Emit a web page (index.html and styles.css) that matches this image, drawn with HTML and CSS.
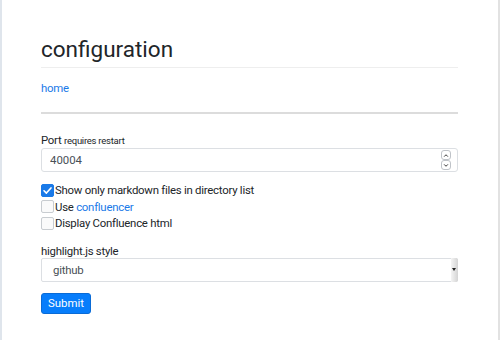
FILE: index.html
```html
<!DOCTYPE html>
<html lang="en">
<head>
  <meta charset="UTF-8" />
  <title>configuration</title>
  <link rel="stylesheet" href="styles.css">
</head>
<body>
  <div class="page">
    <h1>configuration</h1>
    <nav class="crumbs"><a href="#">home</a></nav>
    <hr class="rule">

    <form class="config-form">
      <label class="field-label">Port <small>requires restart</small></label>
      <div class="control">
        <input type="text" class="text-input" value="40004">
        <span class="spinner">
          <span class="spin-btn"><svg viewBox="0 0 8 6" width="6" height="5"><path d="M1.5 4.5 L4 2 L6.5 4.5" fill="none" stroke="#333" stroke-width="1.3"/></svg></span>
          <span class="spin-btn"><svg viewBox="0 0 8 6" width="6" height="5"><path d="M1.5 1.5 L4 4 L6.5 1.5" fill="none" stroke="#333" stroke-width="1.3"/></svg></span>
        </span>
      </div>

      <div class="checks">
        <label class="check"><span class="box checked">
          <svg viewBox="0 0 12 12" width="11" height="11"><path d="M2.2 6.3 L4.8 8.8 L9.8 3.2" fill="none" stroke="#fff" stroke-width="1.8" stroke-linecap="round" stroke-linejoin="round"/></svg>
        </span><span>Show only markdown files in directory list</span></label>
        <label class="check"><span class="box"></span><span>Use <a href="#">confluencer</a></span></label>
        <label class="check"><span class="box"></span><span>Display Confluence html</span></label>
      </div>

      <label class="field-label">highlight.js style</label>
      <div class="control">
        <div class="select-box">github</div>
        <span class="select-arrow"></span>
      </div>

      <button type="button" class="submit-btn">Submit</button>
    </form>
  </div>
</body>
</html>
```

FILE: styles.css
```css
* {
  margin: 0;
  padding: 0;
  box-sizing: border-box;
}
body {
  font-family: 'Roboto', 'Open Sans', sans-serif;
  font-size: 11.4px;
  letter-spacing: -0.25px;
  color: #212529;
  background: #fff;
}
a {
  color: #1a7ae8;
  text-decoration: none;
}
.page {
  height: 340px;
  border-left: 2px solid #dfe5ec;
  border-right: 2px solid #e2e2e2;
  padding: 34px 40px 0 39px;
}
h1 {
  font-size: 22.5px;
  font-weight: 400;
  letter-spacing: 0;
  line-height: 30px;
  padding-bottom: 3px;
  border-bottom: 1px solid #eeeeee;
}
.crumbs {
  padding: 12px 0 0;
  line-height: 16px;
}
.rule {
  border: none;
  border-top: 2px solid #dcdcdc;
  margin: 16px 0 19px;
}
.field-label {
  display: block;
  line-height: 14px;
}
.field-label small {
  font-size: 9.5px;
}
.control {
  position: relative;
  height: 24px;
}
.text-input, .select-box {
  width: 100%;
  height: 24px;
  border: 1px solid #dcdfe3;
  border-radius: 3px;
  padding: 0 8px;
  font: inherit;
  color: #495057;
  line-height: 22px;
}
.select-box {
  padding-left: 11px;
  border-radius: 2px;
}
.spinner {
  position: absolute;
  top: 2px;
  right: 7px;
  display: flex;
  flex-direction: column;
}
.spin-btn {
  width: 10px;
  height: 10px;
  border: 1px solid #bfc3c8;
  border-radius: 3px;
  display: flex;
  align-items: center;
  justify-content: center;
}
.select-arrow {
  position: absolute;
  top: 0;
  right: 0;
  width: 7px;
  height: 24px;
  background: linear-gradient(to right, #f4f4f4, #d4d4d4);
  border-radius: 0 2px 2px 0;
}
.select-arrow::after {
  content: '';
  position: absolute;
  top: 10px;
  left: 1px;
  border-left: 2.5px solid transparent;
  border-right: 2.5px solid transparent;
  border-top: 3px solid #222;
}
.checks {
  margin: 10px 0 12px;
}
.check {
  display: flex;
  align-items: center;
  line-height: 16.5px;
}
.box {
  width: 13px;
  height: 13px;
  border: 1px solid #c8ccd0;
  border-radius: 2px;
  margin-right: 1px;
  display: flex;
  align-items: center;
  justify-content: center;
  background: #fafafa;
}
.box.checked {
  background: #1a7ae8;
  border-color: #1a7ae8;
}
.submit-btn {
  margin-top: 11px;
  background: #077dfb;
  color: #fff;
  border: 1px solid #0a6bd6;
  border-radius: 3px;
  padding: 0 6px;
  height: 21px;
  font: inherit;
}
```
